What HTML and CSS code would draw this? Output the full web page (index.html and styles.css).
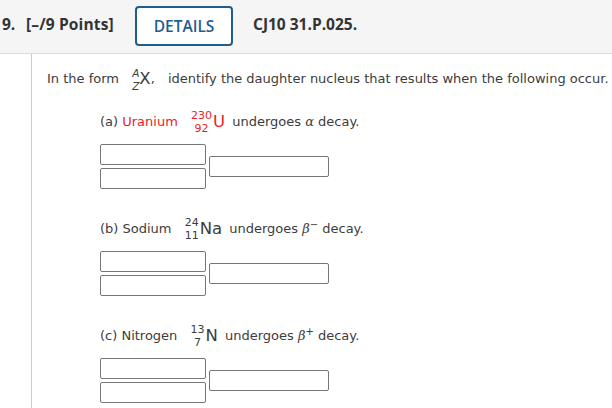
FILE: index.html
```html
<!DOCTYPE html>
<html>
<head>
<meta charset="utf-8">
<link rel="stylesheet" href="styles.css">
</head>
<body>
<div class="header">
  <span class="qnum">9.</span>
  <span class="points">[–/9 Points]</span>
  <span class="details">DETAILS</span>
  <span class="code">CJ10 31.P.025.</span>
</div>
<div class="main">
  <p class="intro">In the form <span class="nuc nuc-form"><span class="scripts"><i>A</i><i>Z</i></span><span class="sym">X</span></span><span class="comma">,</span> identify the daughter nucleus that results when the following occur.</p>

  <div class="part">
    <p class="line">(a) <span class="red">Uranium <span class="nuc"><span class="scripts"><span>230</span><span>92</span></span><span class="sym">U</span></span></span> undergoes <i class="greek">α</i> decay.</p>
    <div class="answers">
      <div class="stack"><div class="box small"></div><div class="box small"></div></div>
      <div class="box wide"></div>
    </div>
  </div>

  <div class="part">
    <p class="line">(b) Sodium <span class="nuc"><span class="scripts"><span>24</span><span>11</span></span><span class="sym">Na</span></span> undergoes <i class="greek">β</i><sup>−</sup> decay.</p>
    <div class="answers">
      <div class="stack"><div class="box small"></div><div class="box small"></div></div>
      <div class="box wide"></div>
    </div>
  </div>

  <div class="part">
    <p class="line">(c) Nitrogen <span class="nuc"><span class="scripts"><span>13</span><span>7</span></span><span class="sym">N</span></span> undergoes <i class="greek">β</i><sup>+</sup> decay.</p>
    <div class="answers">
      <div class="stack"><div class="box small"></div><div class="box small"></div></div>
      <div class="box wide"></div>
    </div>
  </div>
</div>
</body>
</html>
```

FILE: styles.css
```css
html, body {
  margin: 0;
  padding: 0;
  background: #fff;
}
body {
  width: 612px;
  height: 408px;
  overflow: hidden;
}
.header {
  height: 54px;
  background: #f5f5f5;
  border-bottom: 1px solid #dcdcdc;
  display: flex;
  align-items: center;
  font-family: "Open Sans", sans-serif;
  font-weight: 700;
  font-size: 15.5px;
  color: #333;
  box-sizing: border-box;
  padding-bottom: 6px;
}
.qnum {
  margin-left: 2px;
  width: 24px;
}
.points {
  width: 109px;
  letter-spacing: 0.15px;
}
.details {
  box-sizing: border-box;
  width: 98px;
  height: 40px;
  border: 2px solid #1d5e8e;
  border-radius: 4px;
  color: #1d5e8e;
  font-weight: 600;
  display: flex;
  align-items: center;
  justify-content: center;
  background: #fff;
  margin-top: 5px;
  padding-bottom: 1px;
}
.code {
  margin-left: 20px;
}
.main {
  margin-left: 31px;
  border-left: 1px solid #ccc;
  padding-left: 15px;
  height: 354px;
  font-family: "DejaVu Sans", Verdana, sans-serif;
  font-size: 13px;
  color: #3c3c3c;
}
.intro {
  margin: 0;
  padding-top: 15px;
  line-height: 20px;
  height: 20px;
  white-space: nowrap;
}
.part {
  padding-left: 53px;
}
.line {
  margin: 0;
  line-height: 24px;
  height: 24px;
  white-space: nowrap;
}
.part:first-of-type .line {
  margin-top: 21px;
}
.red {
  color: #ee1c25;
}
.nuc {
  display: inline-flex;
  align-items: center;
  vertical-align: middle;
  margin: -8px 3px -8px 9px;
  line-height: 1;
}
.nuc-form {
  margin: -8px 0 -8px 9px;
}
.comma {
  margin-right: 9px;
}
.scripts {
  display: flex;
  flex-direction: column;
  align-items: center;
  font-size: 11px;
  line-height: 12.5px;
  margin-right: 1px;
}
.nuc-form .scripts {
  line-height: 13px;
  font-size: 10.5px;
  margin-right: 0;
}
.scripts i {
  font-style: italic;
}
.sym {
  font-size: 16.5px;
  font-family: "DejaVu Sans", sans-serif;
}
.greek {
  font-family: "DejaVu Serif", serif;
}
sup {
  font-size: 10px;
  line-height: 0;
}
.answers {
  display: flex;
  align-items: center;
  margin-top: 10px;
  margin-bottom: 28px;
}
.stack {
  display: flex;
  flex-direction: column;
  gap: 3px;
}
.box {
  box-sizing: border-box;
  border: 1px solid #767676;
  border-radius: 2px;
  height: 21px;
  background: #fff;
}
.small {
  width: 106px;
}
.wide {
  width: 120px;
  margin-left: 3px;
}
```
